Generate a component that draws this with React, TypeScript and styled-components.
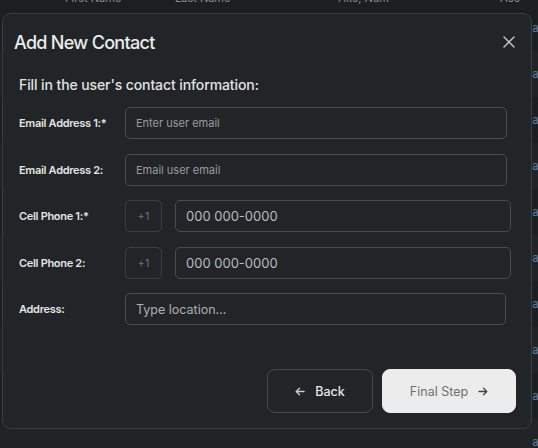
import React from "react";
import styled, { createGlobalStyle } from "styled-components";

const Global = createGlobalStyle`
  html, body { margin: 0; padding: 0; background: #1c1f22; }
  body { font-family: Inter, "Noto Sans", sans-serif; width: 538px; height: 448px; overflow: hidden; }
  #root { position: relative; width: 538px; height: 448px; }
`;

const Page = styled.div`
  position: relative;
  width: 538px;
  height: 448px;
  overflow: hidden;
  background: #1c1f22;
`;

const Table = styled.div`
  display: flex;
  flex-direction: column;
  margin-top: -9px;
`;

const HeaderRow = styled.div`
  display: grid;
  grid-template-columns: 65px 110px 163px 162px 40px;
  height: 14px;
  font-size: 11px;
  color: #8a8d90;
  align-items: center;
`;

const BodyRow = styled.div<{ $alt: boolean }>`
  height: 46px;
  display: flex;
  justify-content: flex-end;
  align-items: center;
  background: ${(p) => (p.$alt ? "#202427" : "#1c1f22")};
  font-size: 11px;
  color: #5b86b0;
  margin-right: -7px;
`;

const Overlay = styled.div`
  position: absolute;
  left: 2px;
  top: 13px;
  width: 530px;
  height: 416px;
  box-sizing: border-box;
  background: #212527;
  border: 1px solid #3a3e41;
  border-radius: 9px;
  display: flex;
  flex-direction: column;
  padding: 16px 15px 15px 11px;
`;

const Header = styled.div`
  display: flex;
  justify-content: space-between;
  align-items: center;
  height: 24px;
`;

const Title = styled.h2`
  margin: 0;
  font-size: 18px;
  font-weight: 500;
  color: #ececec;
  letter-spacing: -0.7px;
`;

const Close = styled.button`
  background: none;
  border: none;
  padding: 0;
  width: 14px;
  height: 14px;
  display: flex;
  align-items: center;
  justify-content: center;
  cursor: pointer;
`;

const Body = styled.div`
  padding-left: 5px;
  display: flex;
  flex-direction: column;
`;

const Subtitle = styled.p`
  margin: 22px 0 0 0;
  font-size: 14px;
  font-weight: 500;
  color: #e2e2e2;
  height: 17px;
  line-height: 17px;
  letter-spacing: -0.1px;
`;

const Form = styled.div`
  display: flex;
  flex-direction: column;
  gap: 14.5px;
  margin-top: 14px;
`;

const Row = styled.div`
  display: grid;
  grid-template-columns: 106px 1fr;
  align-items: center;
`;

const Label = styled.label`
  font-size: 11px;
  font-weight: 600;
  color: #e4e4e4;
  letter-spacing: -0.3px;
`;

const Input = styled.div<{ $w: number; $size: number; $color: string }>`
  width: ${(p) => p.$w}px;
  height: 32px;
  box-sizing: border-box;
  border: 1px solid #4a4d50;
  border-radius: 5px;
  display: flex;
  align-items: center;
  padding-left: 10px;
  font-size: ${(p) => p.$size}px;
  color: ${(p) => p.$color};
`;

const PhoneGroup = styled.div`
  display: flex;
  gap: 13px;
`;

const Prefix = styled.div`
  width: 37px;
  height: 32px;
  box-sizing: border-box;
  border: 1px solid #3c3f42;
  border-radius: 5px;
  display: flex;
  align-items: center;
  justify-content: center;
  font-size: 11px;
  color: #6c6f72;
`;

const Footer = styled.div`
  margin-top: auto;
  display: flex;
  justify-content: flex-end;
  gap: 9px;
`;

const Button = styled.button<{ $primary?: boolean }>`
  height: 44px;
  width: ${(p) => (p.$primary ? 134 : 106)}px;
  box-sizing: border-box;
  border-radius: 8px;
  border: 1px solid ${(p) => (p.$primary ? "#ececec" : "#45484b")};
  background: ${(p) => (p.$primary ? "#ececec" : "transparent")};
  color: ${(p) => (p.$primary ? "#6e6e6e" : "#e6e6e6")};
  font-family: Inter, "Noto Sans", sans-serif;
  font-size: 12.5px;
  font-weight: ${(p) => (p.$primary ? 400 : 500)};
  display: flex;
  align-items: center;
  justify-content: center;
  gap: 10px;
  padding: 0;
`;

const Arrow = ({ dir, color }: { dir: "l" | "r"; color: string }) => (
  <svg width="10" height="9" viewBox="0 0 10 9" fill="none">
    {dir === "l" ? (
      <path d="M9 4.5H1.5M4.5 1.2L1.2 4.5L4.5 7.8" stroke={color} strokeWidth="1.3" strokeLinecap="round" strokeLinejoin="round" />
    ) : (
      <path d="M1 4.5H8.5M5.5 1.2L8.8 4.5L5.5 7.8" stroke={color} strokeWidth="1.3" strokeLinecap="round" strokeLinejoin="round" />
    )}
  </svg>
);

export default function App() {
  const rows = [false, true, false, true, false, true, false, true, false, true];
  return (
    <Page>
      <Global />
      <Table>
        <HeaderRow>
          <span />
          <span>First Name</span>
          <span>Last Name</span>
          <span>Hits, Num</span>
          <span>Acc</span>
        </HeaderRow>
        {rows.map((alt, i) => (
          <BodyRow key={i} $alt={alt}>
            <span>ac</span>
          </BodyRow>
        ))}
      </Table>
      <Overlay>
        <Header>
          <Title>Add New Contact</Title>
          <Close aria-label="Close">
            <svg width="12" height="12" viewBox="0 0 12 12">
              <path d="M1 1L11 11M11 1L1 11" stroke="#c8c8c8" strokeWidth="1.4" strokeLinecap="round" />
            </svg>
          </Close>
        </Header>
        <Body>
          <Subtitle>Fill in the user's contact information:</Subtitle>
          <Form>
            <Row>
              <Label>Email Address 1:*</Label>
              <Input $w={382} $size={11} $color="#9a9c9e">Enter user email</Input>
            </Row>
            <Row>
              <Label>Email Address 2:</Label>
              <Input $w={382} $size={11} $color="#9a9c9e">Email user email</Input>
            </Row>
            <Row>
              <Label>Cell Phone 1:*</Label>
              <PhoneGroup>
                <Prefix>+1</Prefix>
                <Input $w={336} $size={13} $color="#b9bbbc">000 000-0000</Input>
              </PhoneGroup>
            </Row>
            <Row>
              <Label>Cell Phone 2:</Label>
              <PhoneGroup>
                <Prefix>+1</Prefix>
                <Input $w={336} $size={13} $color="#b9bbbc">000 000-0000</Input>
              </PhoneGroup>
            </Row>
            <Row>
              <Label>Address:</Label>
              <Input $w={381} $size={12.5} $color="#aeb0b1">Type location...</Input>
            </Row>
          </Form>
        </Body>
        <Footer>
          <Button>
            <Arrow dir="l" color="#cfcfcf" />
            Back
          </Button>
          <Button $primary>
            Final Step
            <Arrow dir="r" color="#444" />
          </Button>
        </Footer>
      </Overlay>
    </Page>
  );
}
